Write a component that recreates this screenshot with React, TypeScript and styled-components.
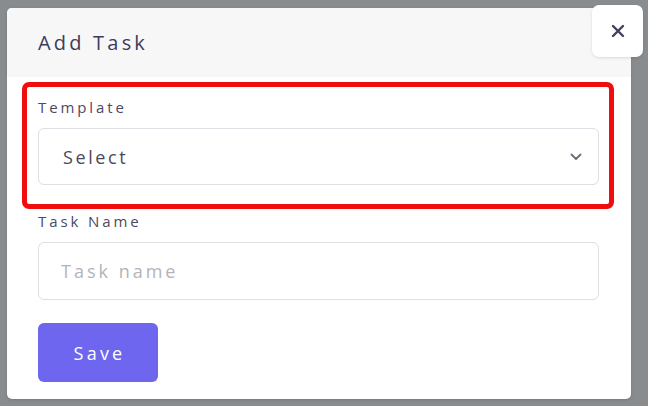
import React from "react";
import styled, { createGlobalStyle } from "styled-components";

const Global = createGlobalStyle`
  html, body { margin: 0; padding: 0; }
  body {
    background: #898c8f;
    font-family: "Open Sans", "Noto Sans", sans-serif;
    width: 648px;
    height: 406px;
    overflow: hidden;
  }
`;

const Page = styled.div`
  padding: 8px 0 0 7px;
`;

const Modal = styled.div`
  position: relative;
  width: 624px;
  height: 391px;
  background: #ffffff;
  border-radius: 5px;
  box-shadow: 0 1px 3px rgba(0, 0, 0, 0.15);
  display: flex;
  flex-direction: column;
`;

const Header = styled.div`
  height: 69px;
  background: #f7f7f8;
  border-radius: 5px 5px 0 0;
  display: flex;
  align-items: center;
  padding-left: 31px;
`;

const Title = styled.h2`
  margin: 0;
  font-size: 20px;
  font-weight: 500;
  letter-spacing: 3.2px;
  color: #3f3c58;
`;

const CloseButton = styled.button`
  position: absolute;
  top: -3px;
  right: -12px;
  width: 51px;
  height: 52px;
  border: none;
  background: #ffffff;
  border-radius: 7px;
  display: flex;
  align-items: center;
  justify-content: center;
  padding: 0;
  box-shadow: 0 1px 3px rgba(0, 0, 0, 0.12);
`;

const Body = styled.div`
  padding: 5px 32px 0 31px;
  display: flex;
  flex-direction: column;
`;

const Highlight = styled.div`
  margin: 0 -15px 0 -16px;
  padding: 10px 10px 19px 11px;
  border: 5px solid #f00d0d;
  border-radius: 7px;
  display: flex;
  flex-direction: column;
`;

const Field = styled.div`
  display: flex;
  flex-direction: column;
  margin-top: ${(p: { $top?: number }) => p.$top ?? 0}px;
`;

const Label = styled.label`
  font-size: 15px;
  line-height: 20px;
  color: #4c4a60;
  letter-spacing: 2.9px;
  margin-bottom: 11px;
`;

const SelectBox = styled.div`
  height: 57px;
  border: 1px solid #dedee5;
  border-radius: 6px;
  box-sizing: border-box;
  display: flex;
  align-items: center;
  justify-content: space-between;
  padding: 0 16px 0 24px;
`;

const SelectText = styled.span`
  font-size: 18px;
  color: #4b4a5a;
  letter-spacing: 2.6px;
`;

const Input = styled.input`
  height: 58px;
  border: 1px solid #dedee5;
  border-radius: 6px;
  box-sizing: border-box;
  padding: 0 22px;
  font-family: inherit;
  font-size: 18px;
  letter-spacing: 3px;
  color: #4b4a5a;
  outline: none;
  &::placeholder {
    color: #b3b3bd;
  }
`;

const SaveButton = styled.button`
  margin-top: 23px;
  width: 120px;
  height: 59px;
  border: none;
  border-radius: 6px;
  background: #6e66ee;
  color: #ffffff;
  font-family: inherit;
  font-size: 18px;
  letter-spacing: 3.2px;
  padding: 0 0 0 3px;
`;

export default function App() {
  return (
    <>
      <Global />
      <Page>
        <Modal>
          <Header>
            <Title>Add Task</Title>
          </Header>
          <CloseButton aria-label="Close">
            <svg width="16" height="16" viewBox="0 0 16 16">
              <path
                d="M3 3 L13 13 M13 3 L3 13"
                stroke="#433f5c"
                strokeWidth="2.4"
                strokeLinecap="round"
              />
            </svg>
          </CloseButton>
          <Body>
            <Highlight>
              <Field>
                <Label>Template</Label>
                <SelectBox>
                  <SelectText>Select</SelectText>
                  <svg width="12" height="8" viewBox="0 0 12 8">
                    <path
                      d="M1.5 1.5 L6 6 L10.5 1.5"
                      stroke="#6b6a7a"
                      strokeWidth="1.8"
                      fill="none"
                      strokeLinecap="round"
                      strokeLinejoin="round"
                    />
                  </svg>
                </SelectBox>
              </Field>
            </Highlight>
            <Field $top={2}>
              <Label>Task Name</Label>
              <Input placeholder="Task name" />
            </Field>
            <SaveButton>Save</SaveButton>
          </Body>
        </Modal>
      </Page>
    </>
  );
}
